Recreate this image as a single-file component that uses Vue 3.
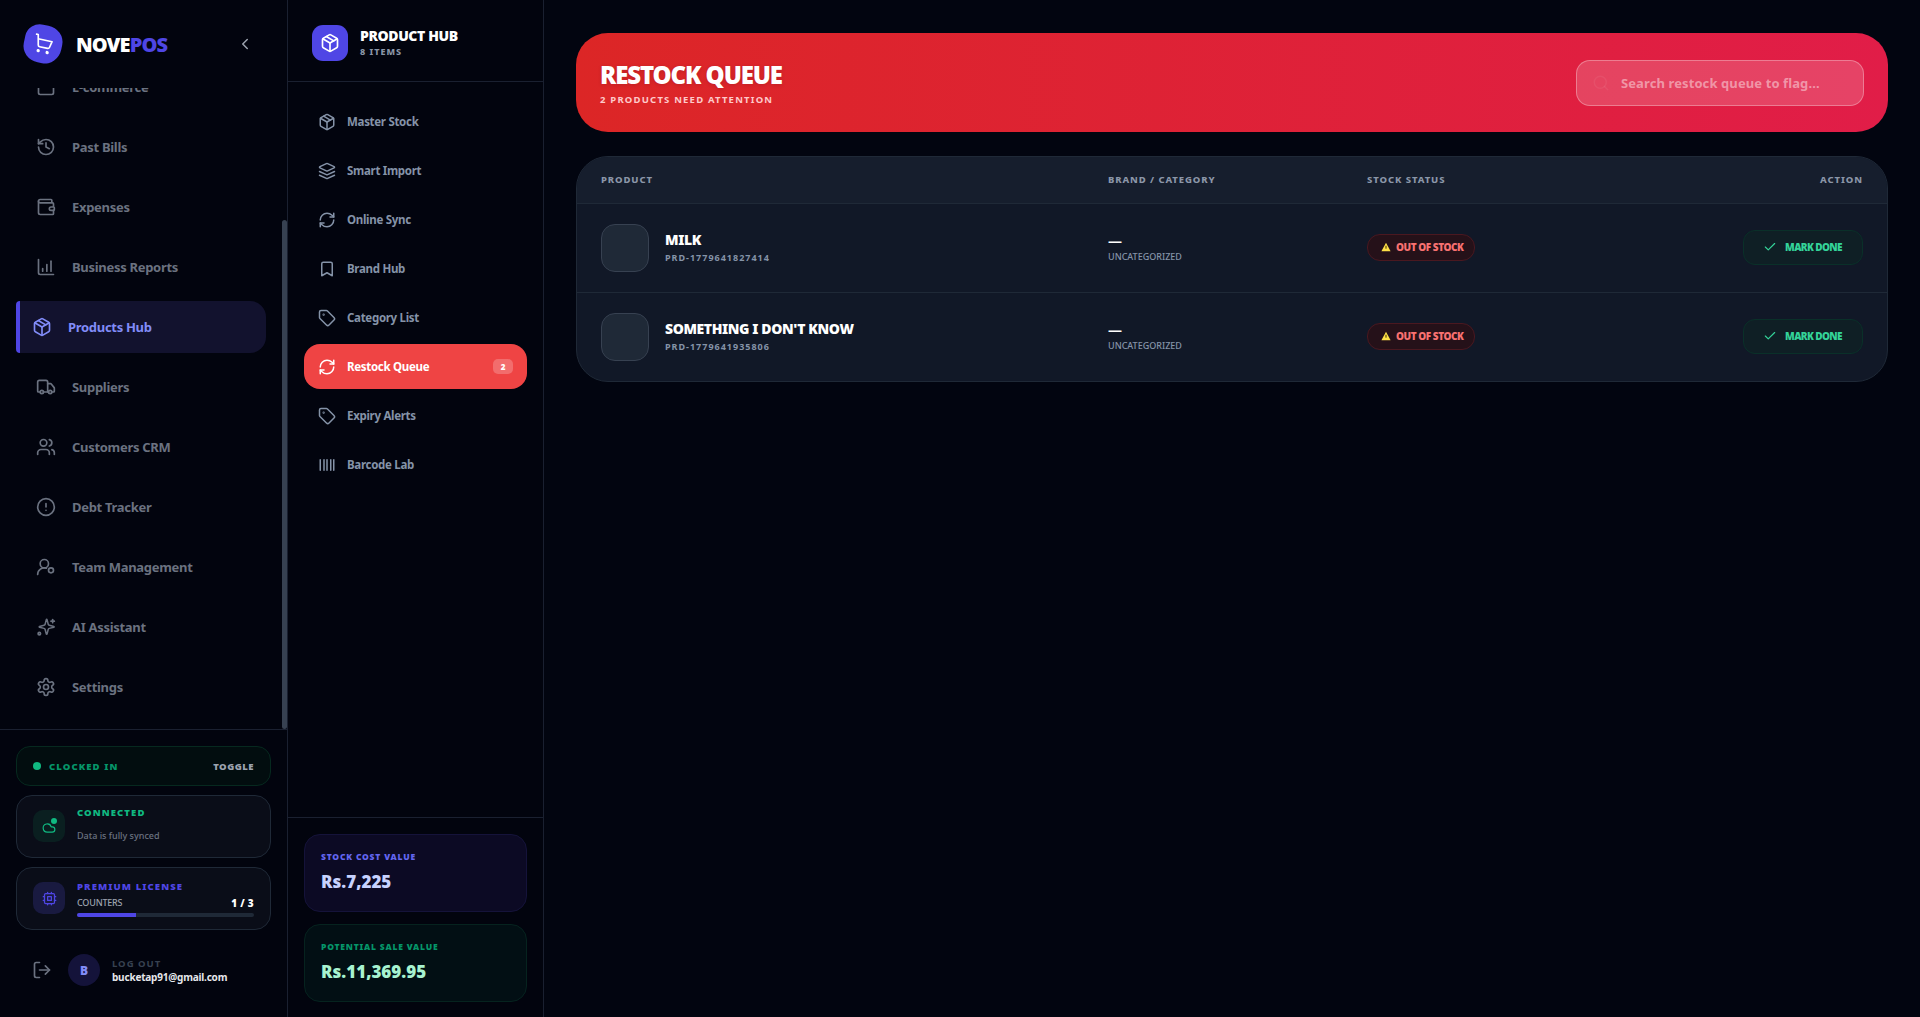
<template>
  <div class="app">

    <!-- main sidebar -->
    <aside class="side">
      <div class="side-head">
        <div class="logo">
          <svg viewBox="0 0 24 24" width="20" height="20" class="ic"><circle cx="8" cy="21" r="1"/><circle cx="19" cy="21" r="1"/><path d="M2.05 2.05h2l2.66 12.42a2 2 0 0 0 2 1.58h9.78a2 2 0 0 0 1.95-1.57l1.65-7.43H5.12"/></svg>
        </div>
        <div class="brand"><span>NOVE</span><span class="brand-b">POS</span></div>
        <svg viewBox="0 0 24 24" width="18" height="18" class="ic collapse"><path d="m15 18-6-6 6-6"/></svg>
      </div>

      <div class="nav-wrap">
        <nav class="nav" ref="navEl">
          <a v-for="n in navItems" :key="n.label" class="nav-item" :class="{ active: n.active }">
            <svg viewBox="0 0 24 24" width="20" height="20" class="ic" v-html="n.icon"></svg>
            <span>{{ n.label }}</span>
          </a>
        </nav>
        <div class="scroll-thumb"></div>
      </div>

      <div class="side-foot">
        <div class="clock">
          <span class="dot"></span>
          <span class="clock-t">CLOCKED IN</span>
          <span class="toggle">TOGGLE</span>
        </div>
        <div class="info">
          <div class="info-ic green">
            <svg viewBox="0 0 24 24" width="14" height="14" class="ic cloud"><path d="M17.5 19H9a7 7 0 1 1 6.71-9h1.79a4.5 4.5 0 1 1 0 9Z"/></svg>
            <span class="info-dot"></span>
          </div>
          <div class="info-b conn">
            <div class="info-t t-green">CONNECTED</div>
            <div class="info-s">Data is fully synced</div>
          </div>
        </div>
        <div class="info">
          <div class="info-ic purple">
            <svg viewBox="0 0 24 24" width="15" height="15" class="ic"><rect x="4" y="4" width="16" height="16" rx="2"/><rect x="9" y="9" width="6" height="6"/><path d="M15 2v2M15 20v2M2 15h2M2 9h2M20 15h2M20 9h2M9 2v2M9 20v2"/></svg>
          </div>
          <div class="info-b">
            <div class="info-t t-purple">PREMIUM LICENSE</div>
            <div class="lic-row"><span>COUNTERS</span><b>1 / 3</b></div>
            <div class="bar"><div class="bar-f" :style="{ width: (1 / 3 * 100) + '%' }"></div></div>
          </div>
        </div>
        <div class="user">
          <svg viewBox="0 0 24 24" width="20" height="20" class="ic logout"><path d="M9 21H5a2 2 0 0 1-2-2V5a2 2 0 0 1 2-2h4"/><path d="m16 17 5-5-5-5"/><path d="M21 12H9"/></svg>
          <div class="avatar">B</div>
          <div>
            <div class="logout-t">LOG OUT</div>
            <div class="email">bucketap91@gmail.com</div>
          </div>
        </div>
      </div>
    </aside>

    <!-- hub sidebar -->
    <aside class="hub">
      <div class="hub-head">
        <div class="hub-ic">
          <svg viewBox="0 0 24 24" width="20" height="20" class="ic" v-html="icons.box"></svg>
        </div>
        <div>
          <div class="hub-t">PRODUCT HUB</div>
          <div class="hub-s">8 ITEMS</div>
        </div>
      </div>
      <div class="hub-nav">
        <a v-for="h in hubItems" :key="h.label" class="hub-item" :class="{ active: h.active }">
          <svg viewBox="0 0 24 24" width="18" height="18" class="ic" v-html="h.icon"></svg>
          <span class="hub-l">{{ h.label }}</span>
          <span v-if="h.count" class="hub-c">{{ h.count }}</span>
        </a>
      </div>
      <div class="hub-foot">
        <div class="val v-cost">
          <div class="val-l">STOCK COST VALUE</div>
          <div class="val-n">Rs.7,225</div>
        </div>
        <div class="val v-sale">
          <div class="val-l">POTENTIAL SALE VALUE</div>
          <div class="val-n">Rs.11,369.95</div>
        </div>
      </div>
    </aside>

    <!-- content -->
    <main class="main">
      <header class="hero">
        <div>
          <h1>RESTOCK QUEUE</h1>
          <p>2 PRODUCTS NEED ATTENTION</p>
        </div>
        <div class="search">
          <svg viewBox="0 0 24 24" width="18" height="18" class="ic s-ic"><circle cx="11" cy="11" r="8"/><path d="m21 21-4.3-4.3"/></svg>
          <span>Search restock queue to flag...</span>
        </div>
      </header>

      <section class="tbl">
        <div class="row thead">
          <div>PRODUCT</div>
          <div>BRAND / CATEGORY</div>
          <div>STOCK STATUS</div>
          <div class="right">ACTION</div>
        </div>
        <div v-for="p in products" :key="p.sku" class="row tr">
          <div class="prod">
            <div class="thumb"></div>
            <div class="p-text">
              <div class="p-name">{{ p.name }}</div>
              <div class="p-sku">{{ p.sku }}</div>
            </div>
          </div>
          <div class="p-text">
            <div class="p-brand">—</div>
            <div class="p-cat">UNCATEGORIZED</div>
          </div>
          <div class="cell-up">
            <span class="badge">
              <svg viewBox="0 0 12 12" width="10" height="10" class="warn"><path d="M6 1 11.5 11H.5Z" fill="#fde047"/><path d="M6 4.5v3.5" stroke="#3a2a00" stroke-width="1.2"/></svg>
              OUT OF STOCK
            </span>
          </div>
          <div class="right cell-up">
            <button class="done">
              <svg viewBox="0 0 24 24" width="14" height="14" class="ic"><path d="M20 6 9 17l-5-5"/></svg>
              MARK DONE
            </button>
          </div>
        </div>
      </section>
    </main>
  </div>
</template>

<script setup>
import { ref, onMounted } from 'vue'

const icons = {
  store: '<rect x="3" y="4" width="18" height="17" rx="2"/><path d="M12 10v.01"/>',
  history: '<path d="M3 12a9 9 0 1 0 9-9 9.75 9.75 0 0 0-6.74 2.74L3 8"/><path d="M3 3v5h5"/><path d="M12 7v5l4 2"/>',
  wallet: '<path d="M19 7V4a1 1 0 0 0-1-1H5a2 2 0 0 0 0 4h15a1 1 0 0 1 1 1v4h-3a2 2 0 0 0 0 4h3a1 1 0 0 0 1-1v-2a1 1 0 0 0-1-1"/><path d="M3 5v14a2 2 0 0 0 2 2h15a1 1 0 0 0 1-1v-4"/>',
  chart: '<path d="M3 3v16a2 2 0 0 0 2 2h16"/><path d="M8 17v-3"/><path d="M13 17V9"/><path d="M18 17V5"/>',
  box: '<path d="M21 8a2 2 0 0 0-1-1.73l-7-4a2 2 0 0 0-2 0l-7 4A2 2 0 0 0 3 8v8a2 2 0 0 0 1 1.73l7 4a2 2 0 0 0 2 0l7-4A2 2 0 0 0 21 16Z"/><path d="m7.5 4.27 9 5.15"/><path d="m3.3 7 8.7 5 8.7-5"/><path d="M12 22V12"/>',
  truck: '<path d="M14 18V6a2 2 0 0 0-2-2H4a2 2 0 0 0-2 2v11a1 1 0 0 0 1 1h2"/><path d="M15 18H9"/><path d="M19 18h2a1 1 0 0 0 1-1v-3.65a1 1 0 0 0-.22-.62l-3.48-4.35A1 1 0 0 0 17.52 8H14"/><circle cx="17" cy="18" r="2"/><circle cx="7" cy="18" r="2"/>',
  users: '<path d="M16 21v-2a4 4 0 0 0-4-4H6a4 4 0 0 0-4 4v2"/><path d="M16 3.13a4 4 0 0 1 0 7.75"/><path d="M22 21v-2a4 4 0 0 0-3-3.87"/><circle cx="9" cy="7" r="4"/>',
  alert: '<circle cx="12" cy="12" r="10"/><path d="M12 8v4"/><path d="M12 16h.01"/>',
  team: '<path d="M2 21a8 8 0 0 1 10.4-7.6"/><circle cx="10" cy="8" r="5"/><circle cx="18" cy="16" r="3"/>',
  spark: '<path d="M9.94 15.5A2 2 0 0 0 8.5 14.06l-6.13-1.58a.5.5 0 0 1 0-.96L8.5 9.94A2 2 0 0 0 9.94 8.5l1.58-6.13a.5.5 0 0 1 .96 0L14.06 8.5A2 2 0 0 0 15.5 9.94l6.13 1.58a.5.5 0 0 1 0 .96L15.5 14.06a2 2 0 0 0-1.44 1.44l-1.58 6.13a.5.5 0 0 1-.96 0Z" transform="translate(2 1) scale(.9)"/><path d="M20 3v4"/><path d="M22 5h-4"/><circle cx="4" cy="20" r="1.5"/>',
  gear: '<path d="M12.22 2h-.44a2 2 0 0 0-2 2v.18a2 2 0 0 1-1 1.73l-.43.25a2 2 0 0 1-2 0l-.15-.08a2 2 0 0 0-2.73.73l-.22.38a2 2 0 0 0 .73 2.73l.15.1a2 2 0 0 1 1 1.72v.51a2 2 0 0 1-1 1.74l-.15.09a2 2 0 0 0-.73 2.73l.22.38a2 2 0 0 0 2.73.73l.15-.08a2 2 0 0 1 2 0l.43.25a2 2 0 0 1 1 1.73V20a2 2 0 0 0 2 2h.44a2 2 0 0 0 2-2v-.18a2 2 0 0 1 1-1.73l.43-.25a2 2 0 0 1 2 0l.15.08a2 2 0 0 0 2.73-.73l.22-.39a2 2 0 0 0-.73-2.73l-.15-.08a2 2 0 0 1-1-1.74v-.5a2 2 0 0 1 1-1.74l.15-.09a2 2 0 0 0 .73-2.73l-.22-.38a2 2 0 0 0-2.73-.73l-.15.08a2 2 0 0 1-2 0l-.43-.25a2 2 0 0 1-1-1.73V4a2 2 0 0 0-2-2z"/><circle cx="12" cy="12" r="3"/>',
  layers: '<path d="m12.83 2.18a2 2 0 0 0-1.66 0L2.6 6.08a1 1 0 0 0 0 1.83l8.58 3.91a2 2 0 0 0 1.66 0l8.58-3.9a1 1 0 0 0 0-1.83Z"/><path d="m22 17.65-9.17 4.16a2 2 0 0 1-1.66 0L2 17.65"/><path d="m22 12.65-9.17 4.16a2 2 0 0 1-1.66 0L2 12.65"/>',
  sync: '<path d="M3 12a9 9 0 0 1 9-9 9.75 9.75 0 0 1 6.74 2.74L21 8"/><path d="M21 3v5h-5"/><path d="M21 12a9 9 0 0 1-9 9 9.75 9.75 0 0 1-6.74-2.74L3 16"/><path d="M8 16H3v5"/>',
  bookmark: '<path d="m19 21-7-4-7 4V5a2 2 0 0 1 2-2h10a2 2 0 0 1 2 2v16z"/>',
  tag: '<path d="M12.586 2.586A2 2 0 0 0 11.172 2H4a2 2 0 0 0-2 2v7.172a2 2 0 0 0 .586 1.414l8.704 8.704a2.426 2.426 0 0 0 3.42 0l6.58-6.58a2.426 2.426 0 0 0 0-3.42z"/><circle cx="7.5" cy="7.5" r=".5"/>',
  barcode: '<path d="M3 5v14"/><path d="M8 5v14"/><path d="M12 5v14"/><path d="M17 5v14"/><path d="M21 5v14"/>'
}

const navItems = [
  { label: 'E-commerce', icon: icons.store },
  { label: 'Past Bills', icon: icons.history },
  { label: 'Expenses', icon: icons.wallet },
  { label: 'Business Reports', icon: icons.chart },
  { label: 'Products Hub', icon: icons.box, active: true },
  { label: 'Suppliers', icon: icons.truck },
  { label: 'Customers CRM', icon: icons.users },
  { label: 'Debt Tracker', icon: icons.alert },
  { label: 'Team Management', icon: icons.team },
  { label: 'AI Assistant', icon: icons.spark },
  { label: 'Settings', icon: icons.gear }
]

const hubItems = [
  { label: 'Master Stock', icon: icons.box },
  { label: 'Smart Import', icon: icons.layers },
  { label: 'Online Sync', icon: icons.sync },
  { label: 'Brand Hub', icon: icons.bookmark },
  { label: 'Category List', icon: icons.tag },
  { label: 'Restock Queue', icon: icons.sync, active: true, count: 2 },
  { label: 'Expiry Alerts', icon: icons.tag },
  { label: 'Barcode Lab', icon: icons.barcode }
]

const products = [
  { name: 'MILK', sku: 'PRD-1779641827414' },
  { name: "SOMETHING I DON'T KNOW", sku: 'PRD-1779641935806' }
]

const navEl = ref(null)

// the nav sits scrolled to the bottom
onMounted(() => {
  navEl.value.scrollTop = navEl.value.scrollHeight
})
</script>

<style>
html, body { margin: 0; background: #020510; }
</style>

<style scoped>
.app {
  display: flex;
  height: 1017px;
  overflow: hidden;
  background: #020510;
  font-family: "Noto Sans", "Open Sans", sans-serif;
  color: #fff;
}
.ic {
  fill: none;
  stroke: currentColor;
  stroke-width: 2;
  stroke-linecap: round;
  stroke-linejoin: round;
  flex-shrink: 0;
}

/* ── main sidebar ── */
.side {
  width: 288px;
  flex-shrink: 0;
  box-sizing: border-box;
  border-right: 1px solid #1a2030;
  display: flex;
  flex-direction: column;
  background: #02040e;
}
.side-head {
  height: 88px;
  flex-shrink: 0;
  box-sizing: border-box;
  display: flex;
  align-items: center;
  padding: 0 24px;
}
.logo {
  width: 38px;
  height: 38px;
  margin-right: 14px;
  background: #4f46e5;
  border-radius: 40% 46% 42% 46% / 38% 42% 46% 42%;
  transform: rotate(12deg);
  display: flex;
  align-items: center;
  justify-content: center;
  color: #fff;
}
.brand {
  font-size: 20px;
  font-weight: 900;
  letter-spacing: -.9px;
  flex: 1;
}
.brand-b { color: #4f46e5; }
.collapse { color: #9ca3af; margin-right: 9px; }

.nav-wrap {
  flex: 1;
  min-height: 0;
  position: relative;
}
.nav {
  height: 100%;
  overflow: hidden;
  box-sizing: border-box;
  padding-bottom: 18px;
  display: flex;
  flex-direction: column;
  gap: 12px;
}
.scroll-thumb {
  position: absolute;
  right: 0;
  top: 132px;
  bottom: 0;
  width: 5px;
  border-radius: 5px;
  background: #374151;
}
.nav-item {
  flex: 0 0 48px;
  display: flex;
  align-items: center;
  gap: 16px;
  margin-left: 16px;
  width: 250px;
  box-sizing: border-box;
  padding-left: 20px;
  font-size: 13px;
  font-weight: 700;
  letter-spacing: -.3px;
  color: #6b7280;
}
.nav-item.active {
  flex-basis: 52px;
  margin-top: -2px;
  margin-bottom: -2px;
  border-left: 4px solid #4f46e5;
  padding-left: 12px;
  background: #12122e;
  border-radius: 4px 16px 16px 4px;
  color: #818cf8;
}

.side-foot {
  flex-shrink: 0;
  height: 288px;
  box-sizing: border-box;
  border-top: 1px solid #1a2030;
  padding: 16px 16px 0;
  display: flex;
  flex-direction: column;
  gap: 9px;
}
.clock {
  height: 40px;
  box-sizing: border-box;
  border: 1px solid #06291f;
  background: #020d0f;
  border-radius: 14px;
  display: flex;
  align-items: center;
  padding: 0 16px;
  font-size: 9.5px;
  font-weight: 900;
  letter-spacing: 1.1px;
}
.dot {
  width: 8px;
  height: 8px;
  border-radius: 50%;
  background: #10b981;
  margin-right: 8px;
}
.clock-t { color: #059669; flex: 1; }
.toggle { color: #9ca3af; letter-spacing: .5px; }
.info {
  height: 63px;
  box-sizing: border-box;
  border: 1px solid #1f2937;
  background: #0a0d18;
  border-radius: 16px;
  display: flex;
  align-items: center;
  gap: 12px;
  padding: 0 16px;
}
.info-ic {
  width: 32px;
  height: 32px;
  border-radius: 10px;
  display: flex;
  align-items: center;
  justify-content: center;
  position: relative;
  margin-top: -1px;
}
.cloud { margin-top: 4px; }
.green { background: #0a1f20; color: #10b981; }
.purple { background: #191a40; color: #4f46e5; }
.info-dot {
  position: absolute;
  top: 8px;
  right: 8px;
  width: 6px;
  height: 6px;
  border-radius: 50%;
  background: #10b981;
}
.info-b { flex: 1; min-width: 0; }
.conn { padding-bottom: 4px; }
.info-t {
  font-size: 9.5px;
  font-weight: 900;
  letter-spacing: 1.1px;
  line-height: 12px;
}
.t-green { color: #10b981; }
.t-purple { color: #4f46e5; }
.info-s {
  margin-top: 11px;
  font-size: 9px;
  line-height: 12px;
  font-weight: 500;
  color: #6b7280;
}
.lic-row {
  display: flex;
  justify-content: space-between;
  margin-top: 4px;
  font-size: 9px;
  line-height: 12px;
  font-weight: 500;
  color: #9ca3af;
  letter-spacing: -.2px;
}
.lic-row b { color: #fff; font-weight: 900; font-size: 10px; letter-spacing: .3px; }
.bar {
  margin-top: 4px;
  height: 4px;
  border-radius: 4px;
  background: #1f2937;
  overflow: hidden;
}
.bar-f { height: 100%; background: #4f46e5; }
.user {
  display: flex;
  align-items: center;
  margin-top: 15px;
  padding-left: 16px;
}
.logout { color: #6b7280; margin-right: 16px; }
.avatar {
  width: 32px;
  height: 32px;
  border-radius: 50%;
  background: #14133a;
  color: #818cf8;
  font-size: 12px;
  font-weight: 900;
  display: flex;
  align-items: center;
  justify-content: center;
  margin-right: 12px;
}
.logout-t {
  font-size: 9.5px;
  font-weight: 700;
  color: #374151;
  letter-spacing: 1px;
  line-height: 13px;
}
.email {
  font-size: 10px;
  font-weight: 700;
  color: #e5e7eb;
  letter-spacing: -.2px;
  line-height: 14px;
}

/* ── hub sidebar ── */
.hub {
  width: 256px;
  flex-shrink: 0;
  box-sizing: border-box;
  border-right: 1px solid #1a2030;
  display: flex;
  flex-direction: column;
  background: #02040e;
}
.hub-head {
  height: 82px;
  flex-shrink: 0;
  box-sizing: border-box;
  border-bottom: 1px solid #1a2030;
  display: flex;
  align-items: center;
  gap: 12px;
  padding: 4px 24px 0;
}
.hub-ic {
  width: 36px;
  height: 36px;
  border-radius: 11px;
  background: #4f46e5;
  display: flex;
  align-items: center;
  justify-content: center;
}
.hub-t {
  font-size: 14px;
  font-weight: 900;
  letter-spacing: -.4px;
  line-height: 18px;
}
.hub-s {
  font-size: 9px;
  font-weight: 800;
  letter-spacing: 1px;
  color: #8b96a8;
  line-height: 12px;
  margin-top: 1px;
}
.hub-nav {
  flex: 1;
  padding: 17px 16px 0;
  display: flex;
  flex-direction: column;
  gap: 4px;
}
.hub-item {
  height: 45px;
  box-sizing: border-box;
  display: flex;
  align-items: center;
  gap: 11px;
  padding: 0 14px;
  border-radius: 16px;
  font-size: 11.5px;
  font-weight: 700;
  letter-spacing: -.3px;
  color: #8593a8;
}
.hub-l { flex: 1; }
.hub-item.active { background: #ef4444; color: #fff; }
.hub-c {
  width: 20px;
  height: 15px;
  border-radius: 5px;
  background: rgba(255,255,255,.22);
  font-size: 8px;
  font-weight: 900;
  letter-spacing: 0;
  text-align: center;
  line-height: 15px;
}
.hub-foot {
  flex-shrink: 0;
  height: 200px;
  box-sizing: border-box;
  border-top: 1px solid #1a2030;
  padding: 16px 16px 0;
  display: flex;
  flex-direction: column;
  gap: 12px;
}
.val {
  height: 78px;
  box-sizing: border-box;
  border-radius: 16px;
  padding: 16px 16px 0;
}
.v-cost { background: #0c0a24; border: 1px solid #15133a; }
.v-sale { background: #020f14; border: 1px solid #06231f; }
.val-l {
  font-size: 8.5px;
  font-weight: 900;
  letter-spacing: .8px;
  line-height: 12px;
}
.v-cost .val-l { color: #6366f1; }
.v-sale .val-l { color: #059669; }
.val-n {
  font-size: 17px;
  font-weight: 900;
  line-height: 22px;
  margin-top: 8px;
}
.v-cost .val-n { color: #c7d2fe; }
.v-sale .val-n { color: #a7f3d0; }

/* ── content ── */
.main {
  flex: 1;
  min-width: 0;
  padding: 33px 32px 0;
}
.hero {
  height: 99px;
  box-sizing: border-box;
  border-radius: 32px;
  background: linear-gradient(90deg, #dc2626, #e11d48);
  display: flex;
  align-items: center;
  justify-content: space-between;
  padding: 0 24px;
  margin-bottom: 24px;
}
.hero h1 {
  margin: 0;
  font-size: 24px;
  font-weight: 900;
  letter-spacing: -1.1px;
  line-height: 30px;
  text-shadow: 0 1px 4px rgba(0,0,0,.15);
}
.hero p {
  margin: 4px 0 0;
  font-size: 9.5px;
  font-weight: 700;
  letter-spacing: 1.2px;
  line-height: 12px;
  color: #fecaca;
}
.search {
  width: 288px;
  height: 46px;
  box-sizing: border-box;
  border: 1px solid rgba(255,255,255,.3);
  border-radius: 14px;
  background: rgba(255,255,255,.17);
  display: flex;
  align-items: center;
  padding-left: 15px;
  gap: 11px;
  font-size: 13px;
  font-weight: 700;
  letter-spacing: .1px;
  color: rgba(255,255,255,.45);
}
.s-ic { color: rgba(255,255,255,.06); }
.tbl {
  border: 1px solid #1f2937;
  border-radius: 32px;
  background: #111827;
  overflow: hidden;
}
.row {
  display: grid;
  grid-template-columns: 507px 259px 1fr 170px;
  align-items: center;
  padding: 0 24px;
}
.right { text-align: right; }
.thead {
  height: 46px;
  box-sizing: border-box;
  padding-bottom: 2px;
  background: #161e2d;
  font-size: 9.5px;
  font-weight: 800;
  letter-spacing: .9px;
  color: #8b96a8;
}
.tr {
  height: 89px;
  box-sizing: border-box;
  border-top: 1px solid #1f2937;
}
.prod { display: flex; align-items: center; gap: 16px; }
.thumb {
  width: 48px;
  height: 48px;
  box-sizing: border-box;
  border-radius: 14px;
  background: #1f2937;
  border: 1px solid #374151;
}
.p-text { padding-bottom: 2px; }
.cell-up { padding-bottom: 2px; }
.p-name {
  font-size: 14px;
  font-weight: 900;
  letter-spacing: -.4px;
  line-height: 18px;
}
.p-sku {
  font-size: 9px;
  font-weight: 700;
  letter-spacing: 1px;
  color: #8593a8;
  line-height: 12px;
  margin-top: 3px;
}
.p-brand {
  font-size: 14px;
  font-weight: 700;
  line-height: 18px;
}
.p-cat {
  font-size: 9px;
  font-weight: 500;
  color: #8593a8;
  line-height: 12px;
  margin-top: 1px;
}
.badge {
  display: inline-flex;
  align-items: center;
  gap: 5px;
  height: 27px;
  box-sizing: border-box;
  padding: 0 11px 0 13px;
  border: 1px solid #4a1820;
  border-radius: 13px;
  background: #251119;
  color: #f87171;
  font-size: 10px;
  font-weight: 900;
  letter-spacing: -.45px;
  vertical-align: middle;
}
.warn { flex-shrink: 0; }
.done {
  display: inline-flex;
  align-items: center;
  gap: 8px;
  height: 35px;
  box-sizing: border-box;
  padding: 0 20px 0 19px;
  border: 1px solid #0a3029;
  border-radius: 12px;
  background: #0f1f25;
  color: #34d399;
  font-family: inherit;
  font-size: 10px;
  font-weight: 900;
  letter-spacing: -.6px;
  vertical-align: middle;
}
</style>
